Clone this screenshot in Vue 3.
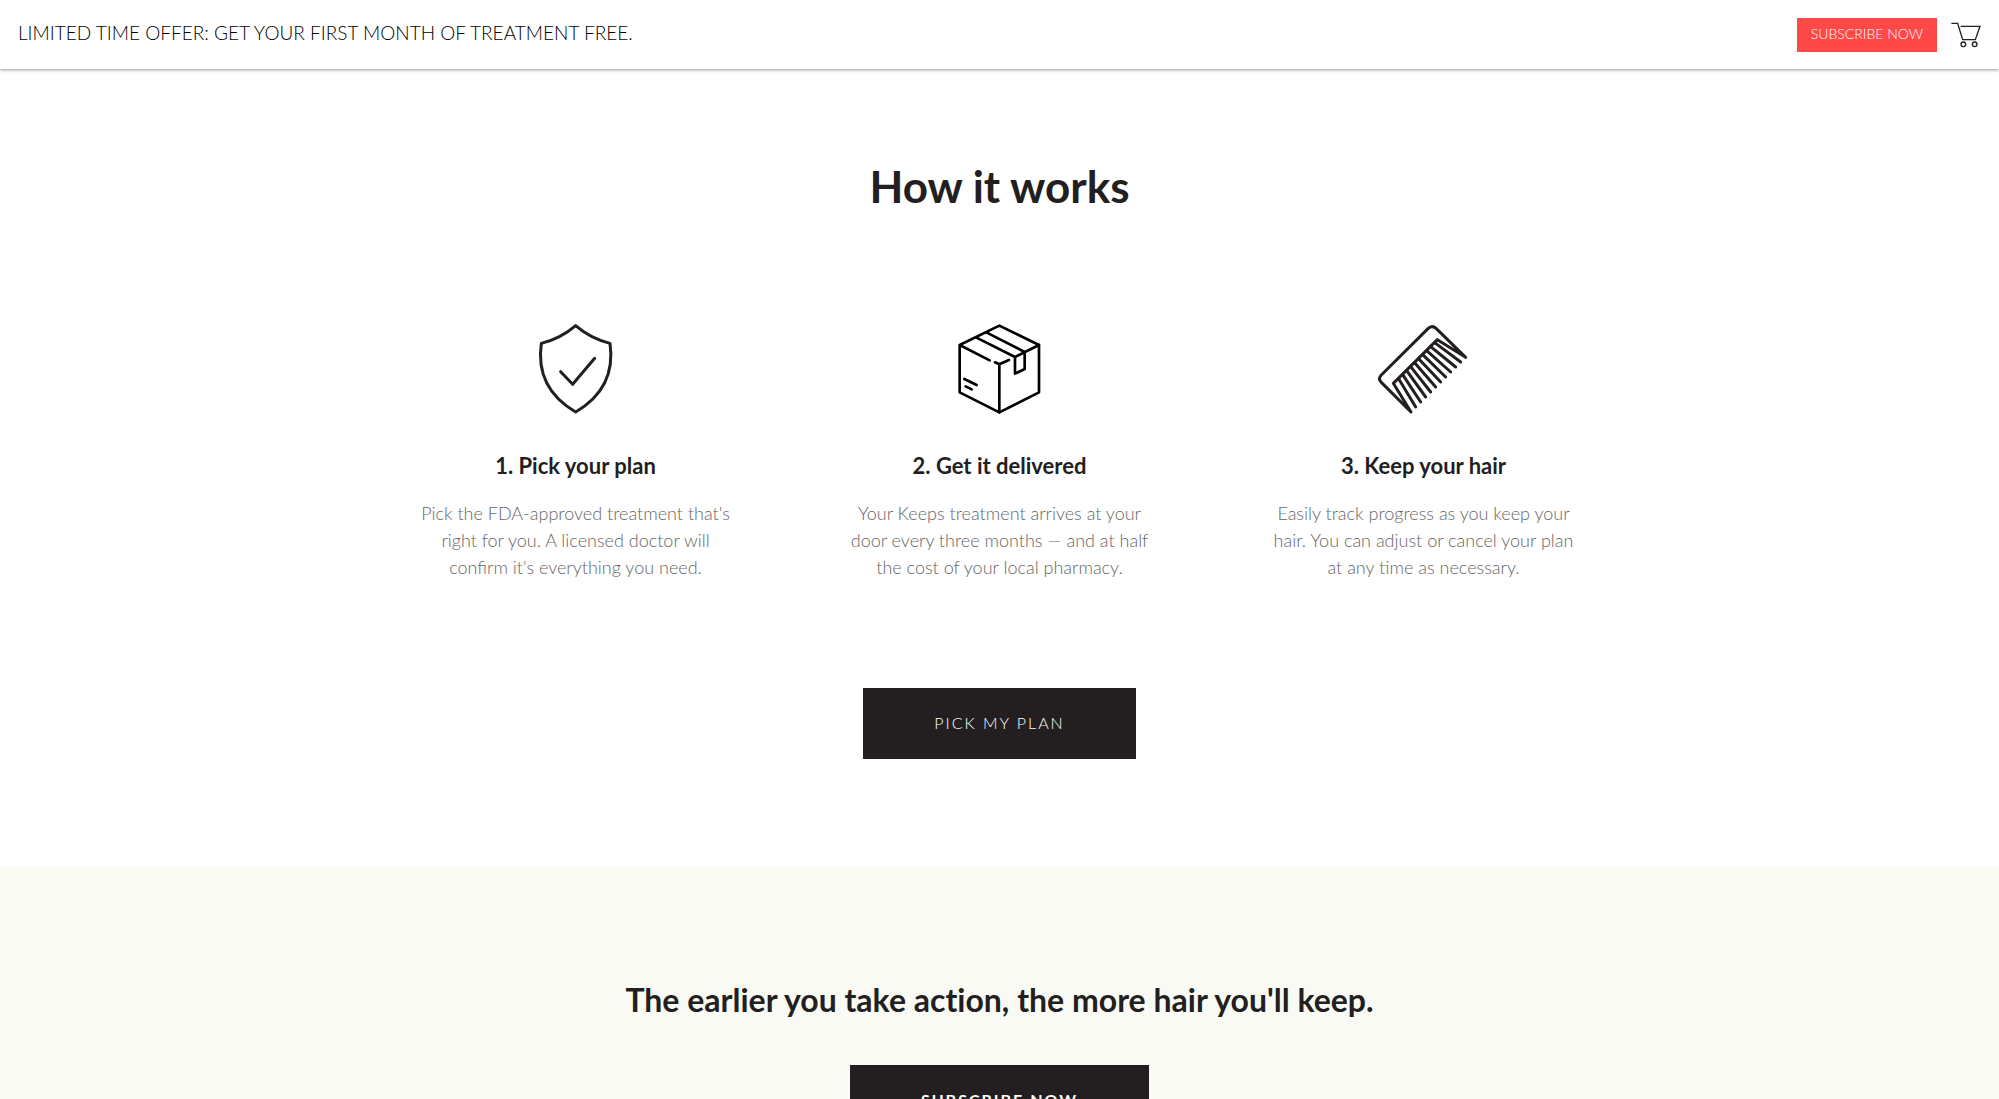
<template>
	<div class="page">
		<header class="offer">
			<p class="offer__text">
				LIMITED TIME OFFER: GET YOUR FIRST MONTH OF TREATMENT FREE.
			</p>
			<div class="offer__actions">
				<button class="offer__subscribe" type="button">SUBSCRIBE NOW</button>
				<a class="offer__cart" href="#" aria-label="Cart">
					<svg viewBox="0 0 90 78">
						<path d="M1 4H20L35 53H73L87 13H29" />
						<circle cx="37" cy="67" r="7" />
						<circle cx="71" cy="67" r="7" />
					</svg>
				</a>
			</div>
		</header>

		<main>
			<section class="how">
				<h1 class="how__title">How it works</h1>
				<div class="steps">
					<article v-for="step in steps" :key="step.title" class="step">
						<svg
							class="step__icon"
							:class="{ 'step__icon--black': step.icon === 'box' }"
							:viewBox="step.viewBox"
						>
							<g v-if="step.icon === 'shield'">
								<path
									d="M167 47Q212 86 270 100C281 177 258 253 167 306C76 253 53 177 64 100Q122 86 167 47Z"
								/>
								<path d="M122 185L158 223L224 145" />
							</g>
							<g v-else-if="step.icon === 'box'">
								<path d="M149 151L59 105L178 47L297 105V247L178 307L59 247V105" />
								<path d="M178 307V163L165 157M178 163L207 150" />
								<path d="M108 82L225 141L297 105M139 67L254 126V177L225 191V141" />
								<path d="M73 207L110 225M77 229L95 238" />
							</g>
							<g v-else>
								<path
									d="M154 306L65 217Q54 206 65 195L205 56Q217 44 230 56L318 142L233 89L101 220L154 306"
								/>
								<path v-for="tooth in teeth" :key="tooth" :d="tooth" />
							</g>
						</svg>
						<h2 class="step__title">{{ step.title }}</h2>
						<p class="step__text">
							<span v-for="line in step.lines" :key="line">{{ line }}</span>
						</p>
					</article>
				</div>
				<button class="btn" type="button">PICK MY PLAN</button>
			</section>

			<section class="action">
				<h2 class="action__title">
					The earlier you take action, the more hair you'll keep.
				</h2>
				<button class="btn btn--bold" type="button">SUBSCRIBE NOW</button>
			</section>
		</main>
	</div>
</template>

<script setup>
const steps = [
	{
		icon: "shield",
		viewBox: "33 42 270 270",
		title: "1. Pick your plan",
		lines: [
			"Pick the FDA-approved treatment that's",
			"right for you. A licensed doctor will",
			"confirm it's everything you need.",
		],
	},
	{
		icon: "box",
		viewBox: "45 42 270 270",
		title: "2. Get it delivered",
		lines: [
			"Your Keeps treatment arrives at your",
			"door every three months — and at half",
			"the cost of your local pharmacy.",
		],
	},
	{
		icon: "comb",
		viewBox: "58 42 270 270",
		title: "3. Keep your hair",
		lines: [
			"Easily track progress as you keep your",
			"hair. You can adjust or cancel your plan",
			"at any time as necessary.",
		],
	},
];

// the teeth run between the two outer edges of the comb
const teeth = Array.from({ length: 10 }, (_, i) => {
	const x = 117 + i * 12;
	const y = 206 - i * 12;
	return `M${x} ${y}L${168 + i * 15} ${291 - i * 15}`;
});
</script>

<style>
body {
	margin: 0;
	background: #fff;
}
</style>

<style scoped>
.page {
	color: #231f20;
	font-family: Lato, "Liberation Sans", sans-serif;
}

h1,
h2,
p {
	margin: 0;
}

button {
	border: 0;
	font-family: inherit;
	cursor: pointer;
}

.offer {
	display: flex;
	justify-content: space-between;
	align-items: center;
	box-sizing: border-box;
	height: 69px;
	padding: 0 18px;
	background: #fff;
	box-shadow: 0 1px 3px rgba(0, 0, 0, 0.4);
}

.offer__text {
	padding-bottom: 3px;
	color: #000;
	font-size: 19px;
	font-weight: 300;
	line-height: 24px;
}

.offer__actions {
	display: flex;
	align-items: center;
	gap: 14px;
}

.offer__subscribe {
	padding: 0 14px 2px;
	background: #ff4848;
	color: #fff;
	font-size: 14px;
	font-weight: 300;
	line-height: 32px;
}

.offer__cart svg {
	display: block;
	width: 30px;
	height: 26px;
	fill: none;
	stroke: #231f20;
	stroke-width: 4;
}

.how {
	display: flex;
	flex-direction: column;
	align-items: center;
	padding: 87px 0 108px;
}

.how__title {
	font-size: 44px;
	font-weight: 700;
	line-height: 60px;
}

.steps {
	display: grid;
	grid-template-columns: repeat(3, 1fr);
	width: 100%;
	max-width: 1272px;
	margin: 108px 0 107px;
}

.step {
	display: flex;
	flex-direction: column;
	align-items: center;
	text-align: center;
}

.step__icon {
	width: 90px;
	height: 90px;
	overflow: visible;
	fill: none;
	stroke: #231f20;
	stroke-width: 9;
	stroke-linecap: round;
	stroke-linejoin: round;
}

.step__icon--black {
	stroke: #000;
	stroke-width: 8;
}

.step__title {
	margin: 36px 0 18px;
	font-size: 22px;
	font-weight: 700;
	line-height: 32px;
}

.step__text {
	color: #666;
	font-size: 18px;
	font-weight: 300;
	line-height: 27px;
}

.step__text span {
	display: block;
}

.btn {
	padding: 0 71px 2px;
	background: #231f20;
	color: #fff;
	font-size: 16px;
	font-weight: 300;
	letter-spacing: 2px;
	line-height: 69px;
}

.btn--bold {
	font-weight: 700;
}

.action {
	display: flex;
	flex-direction: column;
	align-items: center;
	gap: 44px;
	padding: 112px 0;
	background: #f9faf4;
}

.action__title {
	font-size: 32px;
	font-weight: 700;
	font-variant-ligatures: none;
	line-height: 42px;
}
</style>
